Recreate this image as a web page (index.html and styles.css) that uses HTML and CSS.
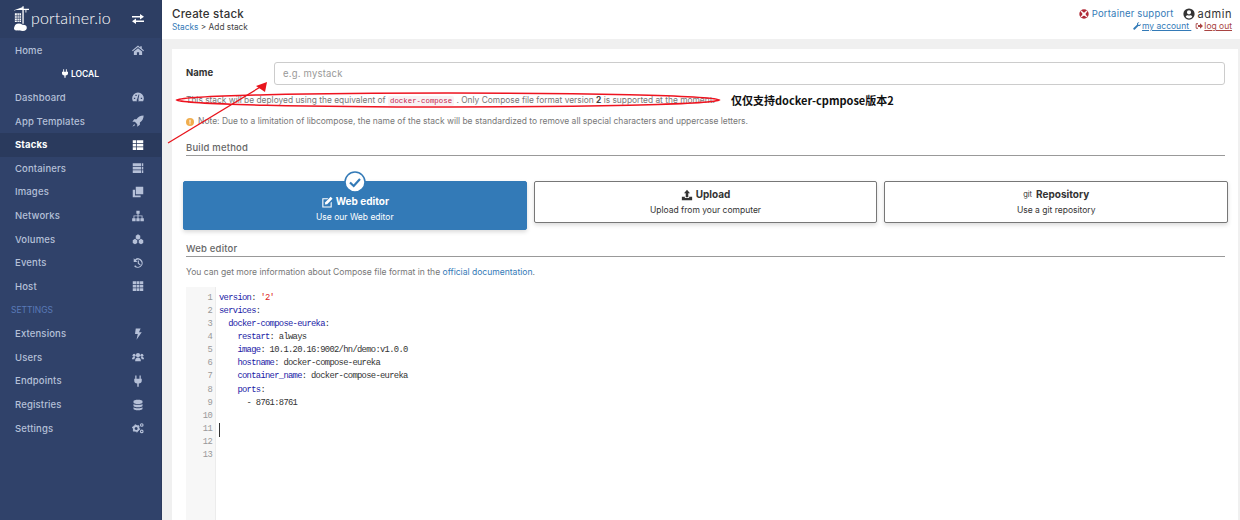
FILE: index.html
```html
<!DOCTYPE html>
<html lang="en">
<head>
<meta charset="utf-8">
<title>Create stack</title>
<link rel="stylesheet" href="styles.css">
</head>
<body>
<aside class="sidebar">
  <div class="brand">
    <svg class="logo" viewBox="0 0 17 29"><path d="M0 4.500 10 1h1v2h6v1.300H1.500V5H0zM9.500 0H11v20H9.500zM1 8h7v10H1z"/><path d="M1 10.500h7v.8H1zM1 13h7v.8H1zM1 15.500h7v.8H1zM3.200 8h.7v10h-.7zM5.500 8h.7v10h-.7z" fill="#2d3e63"/><path d="M13 4.300h1V7h-1z"/><ellipse cx="5.500" cy="23.500" rx="4.800" ry="4"/><ellipse cx="10" cy="24.500" rx="4.500" ry="3.500"/><circle cx="2.500" cy="25" r="2.500"/></svg>
    <span class="brand-name">portainer.io</span>
    <svg class="swap" viewBox="0 0 12 10"><path d="M0 2h8V0l4 2.800L8 5.500V3.500H0zM12 6.500H4v-2L0 7.200 4 10V8h8z"/></svg>
  </div>
  <nav class="nav">
    <a class="nav-item">Home<svg class="ico" viewBox="0 0 16 16"><path d="M8 2 0 8.500l1 1.200 7-5.700 7 5.700 1-1.200-3-2.500V3h-2v1.600zM2.500 10 8 5.500l5.500 4.500v4.500H9.500V11h-3v3.500h-4z"/></svg></a>
    <div class="env"><svg class="plug" viewBox="0 0 10 14"><path d="M2 0h1.500v4H2zM6.500 0H8v4H6.500zM0 4h10v2.500C10 9 8 10 6 10.300V14H4v-3.700C2 10 0 9 0 6.500z"/></svg>LOCAL</div>
    <a class="nav-item">Dashboard<svg class="ico" viewBox="0 0 16 16"><path fill-rule="evenodd" d="M8 2A7.800 7.800 0 0 0 .2 9.800c0 1.400.4 2.800 1 4h13.600c.6-1.200 1-2.600 1-4A7.800 7.800 0 0 0 8 2zM2.500 9h1.800v1.800H2.500zM4.500 5h1.800v1.800H4.500zM11.700 9h1.800v1.800h-1.800zM6.800 11l2-6.500 1 .300-1.300 6.400a1.400 1.400 0 1 1-1.700-.200z"/></svg></a>
    <a class="nav-item">App Templates<svg class="ico" viewBox="0 0 16 16"><path d="M15.500.500c-4.500 0-7.500 2-9.500 5H3L.5 9h3.300l3.200 3.200v3.300L10.500 13v-3c3-2 5-5 5-9.500zM3 12l-2.500 3.500L4 13.500z"/></svg></a>
    <a class="nav-item active">Stacks<svg class="ico" viewBox="0 0 16 16"><path d="M1 1.500h4.300v3.700H1zM6.300 1.500H15v3.700H6.300zM1 6.200h4.300v3.700H1zM6.300 6.200H15v3.700H6.300zM1 10.900h4.300v3.700H1zM6.300 10.900H15v3.700H6.300z"/></svg></a>
    <a class="nav-item">Containers<svg class="ico" viewBox="0 0 16 16"><path d="M1 1.500h11v3.700H1zM13 1.500h2v3.700h-2zM1 6.200h11v3.700H1zM13 6.200h2v3.700h-2zM1 10.900h11v3.700H1zM13 10.900h2v3.700h-2z"/></svg></a>
    <a class="nav-item">Images<svg class="ico" viewBox="0 0 16 16"><path d="M5 1h9.500c.3 0 .5.200.5.500V11H5zM1 5h3v7.500h7.500V15H1z"/></svg></a>
    <a class="nav-item">Networks<svg class="ico" viewBox="0 0 16 16"><path d="M5.800 1h4.400v4H8.700v2.200H14V11h1.800v4h-4.600v-4h1.600V8.300H8.700V11h1.500v4H5.800v-4h1.500V8.300H3.200V11h1.600v4H.2v-4H2V7.200h5.300V5H5.800z"/></svg></a>
    <a class="nav-item">Volumes<svg class="ico" viewBox="0 0 16 16"><path d="M5 3.500 8 1.500l3 2v3.700L8 9 5 7.200zM1 9.500l3-1.800 3 1.800v3.700l-3 1.800-3-1.800zM9 9.500l3-1.800 3 1.800v3.700l-3 1.800-3-1.800z"/></svg></a>
    <a class="nav-item">Events<svg class="ico" viewBox="0 0 16 16"><path d="M8.500 1.500A6.500 6.500 0 0 0 4 3.300L2.300 1.600v5h5L5.300 4.700A4.600 4.600 0 1 1 4.300 11l-1.500 1.200A6.500 6.500 0 1 0 8.500 1.500zM7.700 4.500h1.500v3.700l2.300 1.500-.8 1.200-3-2z"/></svg></a>
    <a class="nav-item">Host<svg class="ico" viewBox="0 0 16 16"><path d="M1 1.500h4.300v3.700H1zM6 1.500h4v3.700H6zM10.700 1.500H15v3.700h-4.300zM1 6.200h4.300v3.700H1zM6 6.200h4v3.700H6zM10.700 6.200H15v3.700h-4.300zM1 10.900h4.300v3.700H1zM6 10.900h4v3.700H6zM10.700 10.900H15v3.700h-4.300z"/></svg></a>
    <div class="nav-title">SETTINGS</div>
    <a class="nav-item">Extensions<svg class="ico" viewBox="0 0 16 16"><path d="M5 .500h6.500L9.300 5.500H13L6 15.500l1.700-7.500H4z"/></svg></a>
    <a class="nav-item">Users<svg class="ico" viewBox="0 0 16 16"><circle cx="8" cy="5.500" r="2.800"/><circle cx="2.800" cy="5.800" r="2"/><circle cx="13.200" cy="5.800" r="2"/><path d="M4.200 13.500c0-3.500 1.300-5 3.800-5s3.800 1.500 3.800 5zM0 11c0-2 .8-3.300 3-3.300l1.300.8C3.500 9.100 3.200 10 3.200 11zM16 11c0-2-.8-3.300-3-3.300l-1.300.8c.8.600 1.100 1.500 1.100 2.500z"/></svg></a>
    <a class="nav-item">Endpoints<svg class="ico" viewBox="0 0 16 16"><path d="M4.300 .500H6v4.500H4.300zM10 .500h1.700v4.500H10zM3 5h10v2.500c0 2.300-1.600 3.600-4 3.900v4.100H7v-4.100c-2.400-.3-4-1.600-4-3.900z"/></svg></a>
    <a class="nav-item">Registries<svg class="ico" viewBox="0 0 16 16"><path d="M2 3c0-1.300 2.700-2 6-2s6 .7 6 2v1.500c0 1.300-2.700 2-6 2s-6-.7-6-2zM2 6.500c1.200 1 3.500 1.300 6 1.300s4.800-.3 6-1.300V9c0 1.300-2.700 2-6 2s-6-.7-6-2zM2 11c1.200 1 3.500 1.300 6 1.300s4.800-.3 6-1.300v2c0 1.300-2.700 2-6 2s-6-.7-6-2z"/></svg></a>
    <a class="nav-item">Settings<svg class="ico ico-wide" viewBox="0 0 16 16"><circle class="gear-body" cx="5.500" cy="8.500" r="3.200"/><circle class="gear-teeth" cx="5.500" cy="8.500" r="4.700"/><circle class="gear-small" cx="13" cy="4" r="1.700"/><circle class="gear-small" cx="13" cy="12.500" r="1.700"/></svg></a>
  </nav>
</aside>

<main class="main">
  <header class="topbar">
    <div class="crumbs">
      <div class="page-title">Create stack</div>
      <div class="breadcrumb"><a class="link">Stacks</a> &gt; Add stack</div>
    </div>
    <div class="account">
      <div class="account-top">
        <svg class="support-icon" viewBox="0 0 16 16"><circle cx="8" cy="8" r="7.500" fill="#b02a37"/><circle cx="8" cy="8" r="3" fill="#fff"/><path d="M2.500 4.500 4.500 2.500 7 6 6 7zM13.500 4.500 11.500 2.500 9 6 10 7zM2.500 11.500l2 2L7 10 6 9zM13.500 11.500l-2 2L9 10l1-1z" fill="#fff"/></svg>
        <a class="link support">Portainer support</a>
        <svg class="user-icon" viewBox="0 0 16 16"><path fill-rule="evenodd" d="M8 .500a7.500 7.500 0 1 0 0 15 7.500 7.500 0 0 0 0-15zM8 3a2.800 2.800 0 1 1 0 5.600A2.800 2.800 0 0 1 8 3zM3.600 12c.4-1.700 1.500-2.500 2.400-2.500.6.300 1.300.5 2 .5s1.400-.2 2-.5c.9 0 2 .8 2.400 2.500A6 6 0 0 1 8 14a6 6 0 0 1-4.400-2z"/></svg>
        <span class="username">admin</span>
      </div>
      <div class="account-links">
        <svg class="mini-icon blue" viewBox="0 0 12 12"><path d="M11.500 2.500 9.500 4.500 7.800 4.200 7.500 2.500l2-2C7.500 0 5.500 1.500 6 4L.5 9.500c-.5 1.500.7 2.500 2 2L8 6c2.500.5 4-1.500 3.500-3.500z"/></svg><a class="link underlined">my account </a>
        <svg class="mini-icon red" viewBox="0 0 12 12"><path d="M4.500 2H2.200C1.500 2 1 2.500 1 3.200v5.600C1 9.500 1.500 10 2.200 10h2.300V8.800H2.300V3.200h2.200zM7.500 2v2.500H4.500v3h3V10L12 6z"/></svg><a class="logout">log out</a>
      </div>
    </div>
  </header>

  <div class="content">
    <section class="panel">
      <div class="name-row">
        <label class="name-label">Name</label>
        <input class="name-input" placeholder="e.g. mystack">
      </div>
      <p class="hint hint-first">This stack will be deployed using the equivalent of <code class="inline-code">docker-compose</code> . Only Compose file format version <b class="hint-strong">2</b> is supported at the moment.</p>
      <p class="hint hint-note"><svg class="warn" viewBox="0 0 12 12"><circle cx="6" cy="6" r="6" fill="#f0ad4e"/><path d="M5.200 2.500h1.600v4.500H5.200zM5.200 8h1.600v1.500H5.200z" fill="#fff"/></svg>Note: Due to a limitation of libcompose, the name of the stack will be standardized to remove all special characters and uppercase letters.</p>

      <div class="section-title section-build">Build method</div>
      <div class="methods">
        <div class="method selected">
          <svg class="check" viewBox="0 0 22 22"><circle cx="11" cy="11" r="10" fill="#fff" stroke="#337ab7" stroke-width="1.500"/><path d="M6 11.500 9.700 15 16 8" fill="none" stroke="#337ab7" stroke-width="2.200"/></svg>
          <div class="method-head"><svg class="method-icon" viewBox="0 0 14 14"><path d="M1.500 2.500h7L7.500 3.800H2.800v8.400h8.400V8L12.500 6.700v6.800h-11z"/><path d="M11.300 1 13.500 3.200 7.200 9.500 4.500 10l.5-2.700z"/></svg>Web editor</div>
          <div class="method-sub">Use our Web editor</div>
        </div>
        <div class="method">
          <div class="method-head"><svg class="method-icon" viewBox="0 0 14 14"><path d="M7 1 10.500 5H8.500v4.500h-3V5H3.500zM1 9h3.500v1.500h5V9H13v4H1z"/></svg>Upload</div>
          <div class="method-sub">Upload from your computer</div>
        </div>
        <div class="method">
          <div class="method-head"><span class="git">git</span>Repository</div>
          <div class="method-sub">Use a git repository</div>
        </div>
      </div>

      <div class="section-title section-editor">Web editor</div>
      <p class="hint hint-doc">You can get more information about Compose file format in the <a class="link">official documentation</a>.</p>

      <div class="editor">
        <div class="gutter">
          <div>1</div><div>2</div><div>3</div><div>4</div><div>5</div><div>6</div><div>7</div><div>8</div><div>9</div><div>10</div><div>11</div><div>12</div><div>13</div>
        </div>
        <div class="code">
          <div><span class="k">version</span>: <span class="s">'2'</span></div>
          <div><span class="k">services</span>:</div>
          <div>  <span class="k">docker-compose-eureka</span>:</div>
          <div>    <span class="k">restart</span>: always</div>
          <div>    <span class="k">image</span>: 10.1.20.16:9002/hn/demo:v1.0.0</div>
          <div>    <span class="k">hostname</span>: docker-compose-eureka</div>
          <div>    <span class="k">container_name</span>: docker-compose-eureka</div>
          <div>    <span class="k">ports</span>:</div>
          <div>      - 8761:8761</div>
          <div>&nbsp;</div>
          <div class="cursor-line"><span class="cursor"></span>&nbsp;</div>
          <div>&nbsp;</div>
          <div>&nbsp;</div>
        </div>
      </div>
    </section>
  </div>
</main>

<svg class="markup" viewBox="0 0 1240 520" width="1240" height="520">
  <path d="M177 100C195 90.700 701 90.700 719 100 701 109.300 195 109.300 177 100z" fill="none" stroke="#ee1420" stroke-width="1.500"/>
  <path d="M168 143 262 86" stroke="#e8141c" stroke-width="1.300" fill="none"/>
  <path d="M267 82 256 86 265 92z" fill="#e8141c"/>
</svg>
<div class="annotation">仅仅支持docker-cpmpose版本2</div>
</body>
</html>
```

FILE: styles.css
```css
* { box-sizing: border-box; }
html, body { margin: 0; height: 100%; }
body {
  display: flex;
  width: 1240px;
  height: 520px;
  overflow: hidden;
  position: relative;
  background: #f0f0f0;
  font-family: Inter, "Noto Sans", sans-serif;
  font-size: 9.5px;
  color: #6f6f6f;
}

/* sidebar */
.sidebar { width: 162px; flex: none; background: #30426a; color: #b5c0d8; border-right: 1px solid #2b3b5e; }
.brand { height: 38px; background: #2d3e63; display: flex; align-items: center; padding: 0 17px 0 14px; color: #fff; }
.logo { width: 15px; height: 28px; fill: #fff; flex: none; }
.brand-name { font-family: Lato, sans-serif; font-weight: 300; font-size: 16px; margin-left: 2px; letter-spacing: .1px; position: relative; top: -2px; }
.swap { width: 12px; height: 10px; fill: #fff; margin-left: auto; }
.nav { display: flex; flex-direction: column; padding-top: .4px; }
.nav-item, .env, .nav-title { height: 23.640px; flex: none; display: flex; align-items: center; }
.nav-item { padding: 0 17px 0 15px; justify-content: space-between; font-size: 9.500px; font-weight: 500; letter-spacing: .15px; }
.nav-item.active { background: #2a3a5d; color: #fff; font-weight: 700; }
.ico { width: 12px; height: 12px; fill: currentColor; flex: none; }
.gear-body { fill: none; stroke: currentColor; stroke-width: 2.400; }
.gear-teeth { fill: none; stroke: currentColor; stroke-width: 1.500; stroke-dasharray: 2 2.900; }
.gear-small { fill: none; stroke: currentColor; stroke-width: 1.500; }
.env { justify-content: center; color: #fff; font-size: 8.500px; font-weight: 600; }
.plug { width: 6px; height: 9px; fill: #fff; margin-right: 3px; }
.nav-title { padding-left: 11px; color: #5a7ab8; font-size: 8.500px; }

/* top */
.main { flex: 1; min-width: 0; display: flex; flex-direction: column; }
.topbar { height: 39px; flex: none; background: #fff; display: flex; justify-content: space-between; padding: 7px 8px 0 10px; }
.page-title { font-size: 11.500px; font-weight: 500; color: #333; letter-spacing: .2px; line-height: 14px; }
.breadcrumb { font-size: 8.300px; color: #444; line-height: 12px; }
.link { color: #337ab7; }
.account { display: flex; flex-direction: column; align-items: flex-end; }
.account-top { display: flex; align-items: center; height: 13px; }
.support-icon { width: 10px; height: 10px; margin-right: 3px; }
.support { font-size: 9.500px; letter-spacing: .2px; }
.user-icon { width: 12px; height: 12px; fill: #333; margin: 0 3px 0 9px; }
.username { font-size: 11px; color: #333; letter-spacing: .55px; }
.account-links { display: flex; align-items: center; font-size: 8.500px; margin-top: 1px; }
.mini-icon { width: 8px; height: 8px; margin-right: 1px; }
.mini-icon.blue { fill: #337ab7; }
.mini-icon.red { fill: #a94442; margin-left: 4px; }
.underlined { text-decoration: underline; white-space: pre; }
.logout { color: #a94442; text-decoration: underline; }

/* panel */
.content { flex: 1; padding: 10px 2px 0 10px; min-height: 0; }
.panel { background: #fff; height: 100%; padding: 13px 13px 0 14px; overflow: hidden; }
.name-row { display: flex; align-items: center; height: 23px; }
.name-label { width: 88px; font-weight: 700; font-size: 9.500px; color: #333; position: relative; top: -1px; }
.name-input { flex: 1; height: 23px; border: 1px solid #ccc; border-radius: 3px; padding: 0 8px; font: 9.500px Inter, sans-serif; outline: none; letter-spacing: .2px; }
.name-input::placeholder { color: #999; }
.hint { margin: 0; font-size: 8.400px; line-height: 13px; color: #777; white-space: nowrap; }
.hint-first { margin-top: 9px; }
.hint-note { margin-top: 7px; display: flex; align-items: center; font-size: 8.480px; }
.warn { width: 8px; height: 8px; margin-right: 4px; }
.hint-strong { color: #444; }
.inline-code { font-family: "Liberation Mono", monospace; font-size: 7.400px; color: #c7254e; background: #f9f2f4; padding: 1px 2px; border-radius: 2px; }
.section-title { font-size: 9.500px; font-weight: 500; letter-spacing: .2px; color: #666; border-bottom: 1px solid #999; line-height: 13px; height: 15px; }
.section-build { margin-top: 13px; }
.methods { display: flex; gap: 7px; margin: 25px -3px 0 -3px; align-items: flex-start; }
.method { flex: 1; height: 42px; border: 1px solid #777; border-radius: 2px; background: #fff; color: #333; text-align: center; box-shadow: 0 2px 4px rgba(0,0,0,.15); position: relative; padding-top: 6px; }
.method.selected { height: 49px; background: #337ab7; border-color: #337ab7; color: #fff; padding-top: 13px; }
.check { position: absolute; width: 22px; height: 22px; left: 50%; top: -11px; margin-left: -11px; }
.method-head { display: flex; align-items: center; justify-content: center; font-size: 10px; font-weight: 700; line-height: 13px; }
.method-icon { width: 12px; height: 12px; fill: currentColor; margin-right: 3px; }
.git { font-size: 7.500px; font-weight: 400; margin-right: 4px; }
.method-sub { font-size: 8.500px; line-height: 12px; margin-top: 3px; }
.section-editor { margin-top: 12px; }
.hint-doc { margin-top: 9px; font-size: 8.550px; }
.editor { display: flex; margin-top: 8px; font-family: "Liberation Mono", monospace; font-size: 8.800px; letter-spacing: -.68px; height: 240px; }
.gutter { width: 30px; background: #f7f7f7; border-right: 1px solid #ececec; color: #999; text-align: right; padding: 5px 3px 0 0; flex: none; }
.gutter div, .code div { height: 13.080px; line-height: 13.080px; }
.code { padding: 5px 0 0 3px; color: #333; }
.code div { white-space: pre; }
.k { color: #1a1aa6; }
.s { color: #d22; }
.cursor-line { position: relative; }
.cursor { position: absolute; left: 0; top: 0; width: 1px; height: 14px; background: #333; }

/* annotations drawn over the screenshot */
.markup { position: absolute; left: 0; top: 0; pointer-events: none; }
.annotation { position: absolute; left: 731px; top: 93px; font-family: "Noto Sans CJK SC", sans-serif; font-weight: 700; font-size: 11px; line-height: 15px; color: #111; white-space: nowrap; }
```
